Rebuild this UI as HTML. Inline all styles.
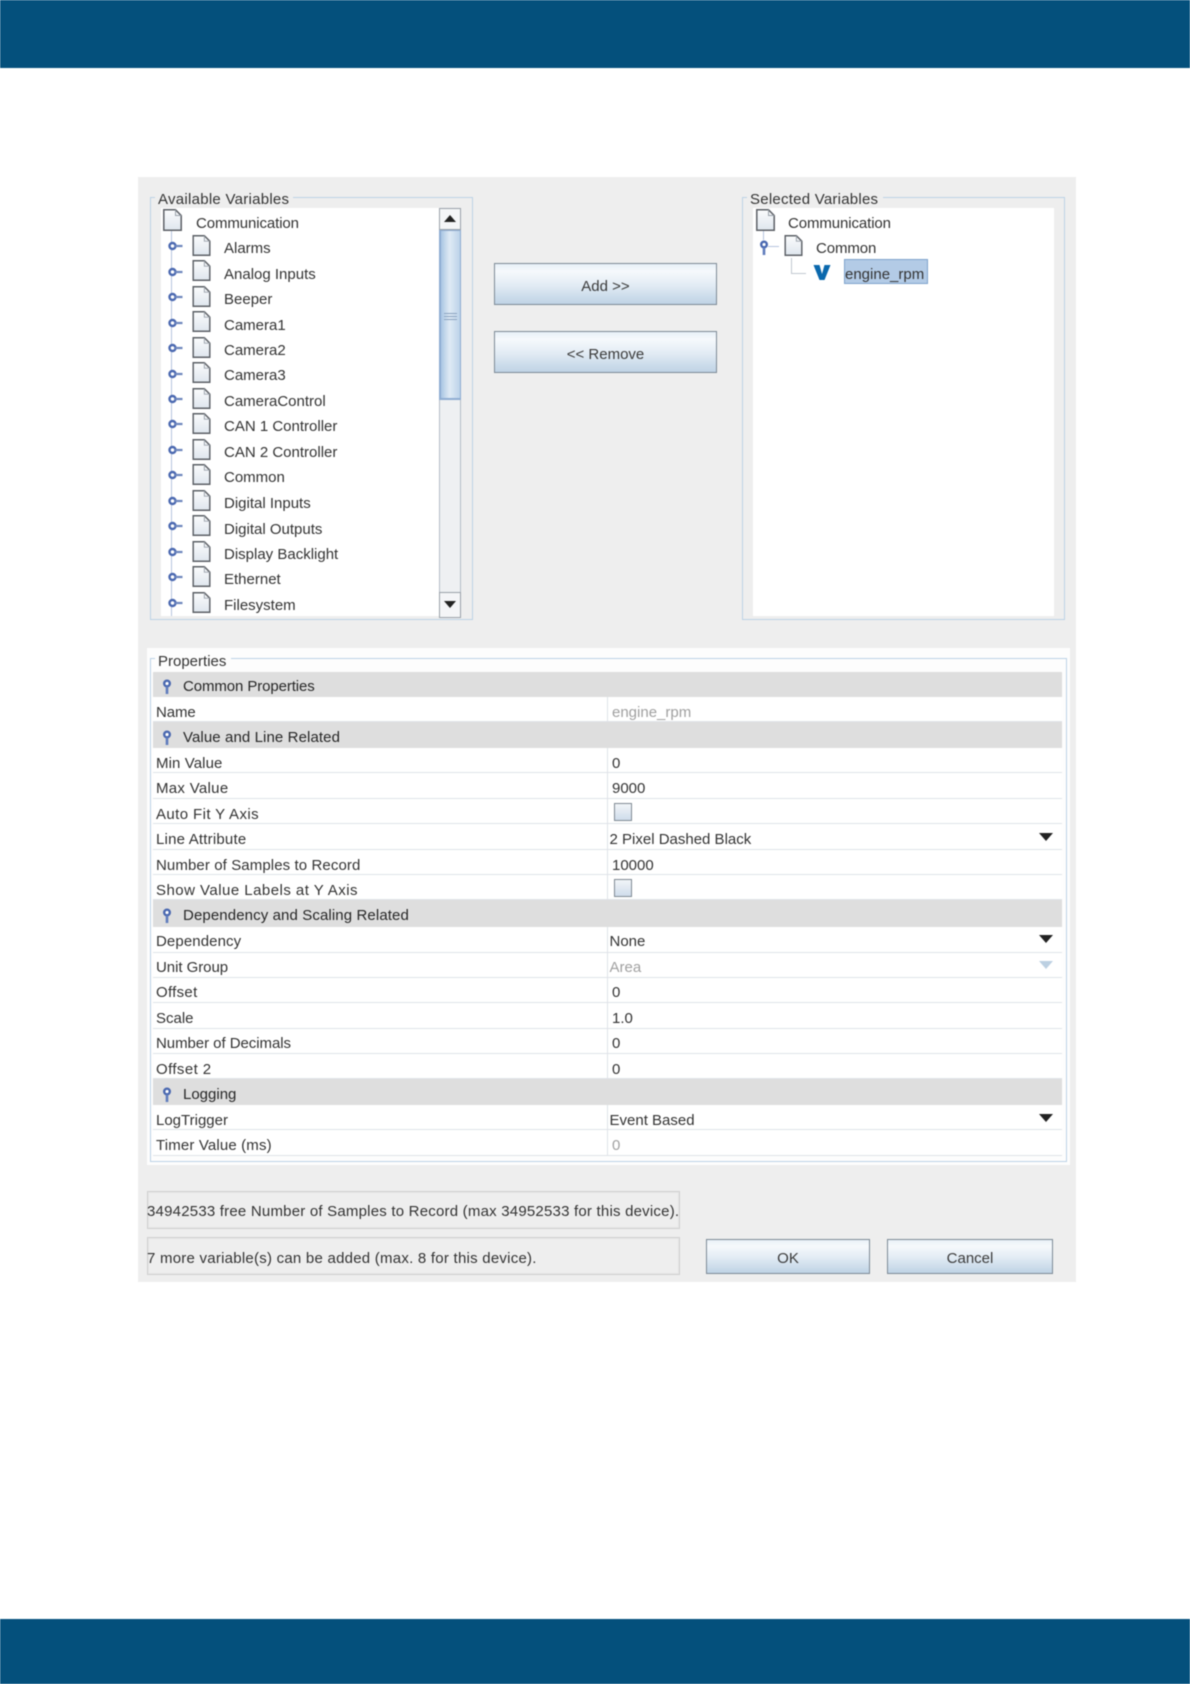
<!DOCTYPE html>
<html><head><meta charset="utf-8"><title>Variables</title>
<style>
html,body{margin:0;padding:0;background:#fff}
#p{position:relative;width:1190px;height:1684px;overflow:hidden;background:#fff;font:15px/1 "Liberation Sans",sans-serif;color:#333}
#p div,#p svg{position:absolute}
#w{left:0;top:0;width:1190px;height:1684px;filter:blur(.45px)}
.bar{left:0;width:1190px;background:#04507c}
.t{white-space:nowrap;height:26px;line-height:26px;margin-top:1px}
.gb{border:1px solid #bcd2e6;box-sizing:border-box}
.btn{box-sizing:border-box;border:1px solid #7d8a96;background:linear-gradient(#e8f0f7 0,#f6f9fc 18%,#e4edf5 50%,#bfd3e5 100%);text-align:center;color:#3a3a3a;margin-top:0}
.r{left:153px;width:909px;background:#fff;border-bottom:1px solid #dfe3e8;box-sizing:border-box}
.h{left:153px;width:909px;background:#dedede}
.l{left:156px;margin-top:1.5px}.v{left:612px;margin-top:1.5px}.c{left:609.5px;margin-top:1.5px}
.hd{left:183px;color:#262626;margin-top:1.5px}
.gr{color:#a0a0a0}
.sb{box-sizing:border-box;border:1px solid #b4bdc7;background:#eef0f2}
.st{left:147px;width:533px;box-sizing:border-box;border:1px solid #cfcfcf;box-shadow:inset 0 0 0 1px #e6e6e6;background:#eee}
</style></head><body>
<div id="p"><div id="w">
<svg width="0" height="0" style="left:0;top:0">
<defs>
<linearGradient id="dg" x1="0" y1="0" x2="0" y2="1"><stop offset="0" stop-color="#fbfcfd"/><stop offset="1" stop-color="#dfe6ee"/></linearGradient>
<symbol id="doc" viewBox="0 0 19 22"><path d="M.8.8H12.5L18.2 6.5V21.2H.8Z" fill="url(#dg)" stroke="#5c6066" stroke-width="1.5"/><path d="M12.5.8V6.5H18.2" fill="none" stroke="#9aa2ab" stroke-width="1"/></symbol>
<symbol id="node" viewBox="0 0 16 12"><circle cx="5.5" cy="6" r="3" fill="#fff" stroke="#4a68b0" stroke-width="2.4"/><path d="M8 6H15.5" stroke="#6d86bd" stroke-width="2.2"/></symbol>
<symbol id="key" viewBox="0 0 10 16"><circle cx="5" cy="4.5" r="2.8" fill="#fff" stroke="#4a68b0" stroke-width="2.4"/><path d="M5 7.5V15" stroke="#5f7cbc" stroke-width="2.6"/></symbol>
</defs></svg>

<div class="bar" style="top:0;height:68px"></div>
<div class="bar" style="top:1619px;height:65px"></div>

<div style="left:138px;top:177px;width:938px;height:1105px;background:#eeeeee"></div>

<!-- Available -->
<div class="gb" style="left:150px;top:197px;width:323px;height:423px"></div>
<div style="left:155px;top:190px;width:138px;height:16px;background:#eee"></div>
<div class="t" style="left:158px;top:185px;margin-top:1.5px;letter-spacing:.27px">Available Variables</div>
<div style="left:161px;top:208px;width:278px;height:408px;background:#fff"></div>
<div style="left:171px;top:231px;width:1px;height:385px;background:#b6c4de"></div>

<svg style="left:163px;top:209px" width="19" height="22"><use href="#doc"/></svg>
<div class="t" style="left:196px;top:210px;letter-spacing:-.1px">Communication</div>

<svg style="left:167px;top:240px" width="16" height="12"><use href="#node"/></svg><svg style="left:192px;top:235px" width="19" height="21"><use href="#doc"/></svg><div class="t" style="left:224px;top:235px">Alarms</div>
<svg style="left:167px;top:266px" width="16" height="12"><use href="#node"/></svg><svg style="left:192px;top:260px" width="19" height="21"><use href="#doc"/></svg><div class="t" style="left:224px;top:261px">Analog Inputs</div>
<svg style="left:167px;top:291px" width="16" height="12"><use href="#node"/></svg><svg style="left:192px;top:286px" width="19" height="21"><use href="#doc"/></svg><div class="t" style="left:224px;top:286px">Beeper</div>
<svg style="left:167px;top:317px" width="16" height="12"><use href="#node"/></svg><svg style="left:192px;top:311px" width="19" height="21"><use href="#doc"/></svg><div class="t" style="left:224px;top:312px">Camera1</div>
<svg style="left:167px;top:342px" width="16" height="12"><use href="#node"/></svg><svg style="left:192px;top:337px" width="19" height="21"><use href="#doc"/></svg><div class="t" style="left:224px;top:337px">Camera2</div>
<svg style="left:167px;top:368px" width="16" height="12"><use href="#node"/></svg><svg style="left:192px;top:362px" width="19" height="21"><use href="#doc"/></svg><div class="t" style="left:224px;top:362px">Camera3</div>
<svg style="left:167px;top:393px" width="16" height="12"><use href="#node"/></svg><svg style="left:192px;top:388px" width="19" height="21"><use href="#doc"/></svg><div class="t" style="left:224px;top:388px">CameraControl</div>
<svg style="left:167px;top:418px" width="16" height="12"><use href="#node"/></svg><svg style="left:192px;top:413px" width="19" height="21"><use href="#doc"/></svg><div class="t" style="left:224px;top:413px">CAN 1 Controller</div>
<svg style="left:167px;top:444px" width="16" height="12"><use href="#node"/></svg><svg style="left:192px;top:439px" width="19" height="21"><use href="#doc"/></svg><div class="t" style="left:224px;top:439px">CAN 2 Controller</div>
<svg style="left:167px;top:469px" width="16" height="12"><use href="#node"/></svg><svg style="left:192px;top:464px" width="19" height="21"><use href="#doc"/></svg><div class="t" style="left:224px;top:464px">Common</div>
<svg style="left:167px;top:495px" width="16" height="12"><use href="#node"/></svg><svg style="left:192px;top:490px" width="19" height="21"><use href="#doc"/></svg><div class="t" style="left:224px;top:490px">Digital Inputs</div>
<svg style="left:167px;top:520px" width="16" height="12"><use href="#node"/></svg><svg style="left:192px;top:515px" width="19" height="21"><use href="#doc"/></svg><div class="t" style="left:224px;top:516px">Digital Outputs</div>
<svg style="left:167px;top:546px" width="16" height="12"><use href="#node"/></svg><svg style="left:192px;top:541px" width="19" height="21"><use href="#doc"/></svg><div class="t" style="left:224px;top:541px">Display Backlight</div>
<svg style="left:167px;top:571px" width="16" height="12"><use href="#node"/></svg><svg style="left:192px;top:566px" width="19" height="21"><use href="#doc"/></svg><div class="t" style="left:224px;top:566px">Ethernet</div>
<svg style="left:167px;top:597px" width="16" height="12"><use href="#node"/></svg><svg style="left:192px;top:592px" width="19" height="21"><use href="#doc"/></svg><div class="t" style="left:224px;top:592px">Filesystem</div>

<!-- scrollbar -->
<div class="sb" style="left:439px;top:208px;width:22px;height:410px"></div>
<div class="sb" style="left:439px;top:208px;width:22px;height:22px;background:#f4f5f7;border-color:#9aa1a9"></div>
<svg style="left:443px;top:214px" width="14" height="9"><path d="M7 1L13 8H1Z" fill="#222"/></svg>
<div style="left:439px;top:230px;width:22px;height:170px;box-sizing:border-box;border:1px solid #8fadd2;border-left-width:2px;border-bottom-width:2px;background:linear-gradient(90deg,#a9c6e4,#dfeaf5 45%,#bcd3e9)"></div>
<div style="left:444px;top:313px;width:13px;height:1px;background:#8ba3bf"></div>
<div style="left:444px;top:316px;width:13px;height:1px;background:#8ba3bf"></div>
<div style="left:444px;top:319px;width:13px;height:1px;background:#8ba3bf"></div>
<div class="sb" style="left:439px;top:592px;width:22px;height:26px;background:#f4f5f7;border-color:#9aa1a9"></div>
<svg style="left:443px;top:600px" width="14" height="9"><path d="M1 1H13L7 8Z" fill="#222"/></svg>

<!-- buttons -->
<div class="btn t" style="left:494px;top:263px;width:223px;height:42px;line-height:46px">Add &gt;&gt;</div>
<div class="btn t" style="left:494px;top:331px;width:223px;height:42px;line-height:46px">&lt;&lt; Remove</div>

<!-- Selected -->
<div class="gb" style="left:742px;top:197px;width:323px;height:423px"></div>
<div style="left:747px;top:190px;width:136px;height:16px;background:#eee"></div>
<div class="t" style="left:750px;top:185px;margin-top:1.5px;letter-spacing:.24px">Selected Variables</div>
<div style="left:753px;top:208px;width:301px;height:408px;background:#fff"></div>
<svg style="left:756px;top:209px" width="19" height="22"><use href="#doc"/></svg>
<div class="t" style="left:788px;top:210px;letter-spacing:-.1px">Communication</div>
<div style="left:763px;top:231px;width:1px;height:9px;background:#b6c4de"></div>
<svg style="left:759px;top:240px" width="10" height="16"><use href="#key"/></svg>
<div style="left:768px;top:246px;width:11px;height:1px;background:#b6c4de"></div>
<svg style="left:784px;top:235px" width="19" height="21"><use href="#doc"/></svg>
<div class="t" style="left:816px;top:235px;letter-spacing:-.1px">Common</div>
<div style="left:791px;top:258px;width:1px;height:15px;background:#c2c8d0"></div>
<div style="left:791px;top:273px;width:15px;height:1px;background:#c2c8d0"></div>
<svg style="left:813px;top:264px" width="18" height="17"><path d="M.5 1H6.5L9 10L11.5 1H17.5L11.5 16H6.5Z" fill="#0a68ad"/></svg>
<div style="left:844px;top:259px;width:84px;height:25px;background:#b3cbe6;box-sizing:border-box;border:1px solid #7ea3cd"></div>
<div class="t" style="left:845px;top:261px">engine_rpm</div>

<!-- Properties -->
<div style="left:147px;top:648px;width:923px;height:517px;background:#fdfdfd"></div>
<div class="gb" style="left:150px;top:658px;width:917px;height:504px"></div>
<div style="left:155px;top:650px;width:76px;height:16px;background:#fdfdfd"></div>
<div class="t" style="left:158px;top:647px;margin-top:2px">Properties</div>

<div class="h" style="top:672px;height:25px"></div>
<div class="r" style="top:697px;height:25px"></div>
<div class="h" style="top:722px;height:26px"></div>
<div class="r" style="top:748px;height:25px"></div>
<div class="r" style="top:773px;height:26px"></div>
<div class="r" style="top:799px;height:25px"></div>
<div class="r" style="top:824px;height:26px"></div>
<div class="r" style="top:850px;height:25px"></div>
<div class="r" style="top:875px;height:25px"></div>
<div class="h" style="top:900px;height:27px"></div>
<div class="r" style="top:927px;height:26px"></div>
<div class="r" style="top:953px;height:25px"></div>
<div class="r" style="top:978px;height:25px"></div>
<div class="r" style="top:1003px;height:26px"></div>
<div class="r" style="top:1029px;height:25px"></div>
<div class="r" style="top:1054px;height:25px"></div>
<div class="h" style="top:1079px;height:26px"></div>
<div class="r" style="top:1105px;height:25px"></div>
<div class="r" style="top:1130px;height:26px"></div>
<div style="left:607px;top:697px;width:1px;height:25px;background:#dfe3e8"></div>
<div style="left:607px;top:748px;width:1px;height:152px;background:#dfe3e8"></div>
<div style="left:607px;top:927px;width:1px;height:152px;background:#dfe3e8"></div>
<div style="left:607px;top:1105px;width:1px;height:51px;background:#dfe3e8"></div>

<svg style="left:162px;top:679px" width="10" height="16"><use href="#key"/></svg><div class="t hd" style="top:672px;letter-spacing:-.1px">Common Properties</div>
<div class="t l" style="top:698px;letter-spacing:-.1px">Name</div><div class="t v gr" style="top:698px">engine_rpm</div>
<svg style="left:162px;top:730px" width="10" height="16"><use href="#key"/></svg><div class="t hd" style="top:723px;letter-spacing:.1px">Value and Line Related</div>
<div class="t l" style="top:749px;letter-spacing:.1px">Min Value</div><div class="t v" style="top:749px">0</div>
<div class="t l" style="top:774px;letter-spacing:.3px">Max Value</div><div class="t v" style="top:774px">9000</div>
<div class="t l" style="top:800px;letter-spacing:.4px">Auto Fit Y Axis</div>
<div style="left:614px;top:803px;width:18px;height:18px;box-sizing:border-box;border:1px solid #7f8a94;background:linear-gradient(#f2f5f8,#cfdceb)"></div>
<div class="t l" style="top:825px;letter-spacing:.2px">Line Attribute</div><div class="t c" style="top:825px">2 Pixel Dashed Black</div>
<svg style="left:1038px;top:833px" width="16" height="9"><path d="M1 0H15L8 8Z" fill="#222"/></svg>
<div class="t l" style="top:851px;letter-spacing:.1px">Number of Samples to Record</div><div class="t v" style="top:851px">10000</div>
<div class="t l" style="top:876px;letter-spacing:.47px">Show Value Labels at Y Axis</div>
<div style="left:614px;top:879px;width:18px;height:18px;box-sizing:border-box;border:1px solid #7f8a94;background:linear-gradient(#f2f5f8,#cfdceb)"></div>
<svg style="left:162px;top:908px" width="10" height="16"><use href="#key"/></svg><div class="t hd" style="top:901px;letter-spacing:.11px">Dependency and Scaling Related</div>
<div class="t l" style="top:927px;letter-spacing:.1px">Dependency</div><div class="t c" style="top:927px">None</div>
<svg style="left:1038px;top:935px" width="16" height="9"><path d="M1 0H15L8 8Z" fill="#222"/></svg>
<div class="t l" style="top:953px;letter-spacing:-.05px">Unit Group</div><div class="t c gr" style="top:953px">Area</div>
<svg style="left:1038px;top:961px" width="16" height="9"><path d="M1 0H15L8 8Z" fill="#bcd0e2"/></svg>
<div class="t l" style="top:978px;letter-spacing:.3px">Offset</div><div class="t v" style="top:978px">0</div>
<div class="t l" style="top:1004px">Scale</div><div class="t v" style="top:1004px">1.0</div>
<div class="t l" style="top:1029px;letter-spacing:-.05px">Number of Decimals</div><div class="t v" style="top:1029px">0</div>
<div class="t l" style="top:1055px;letter-spacing:.4px">Offset 2</div><div class="t v" style="top:1055px">0</div>
<svg style="left:162px;top:1087px" width="10" height="16"><use href="#key"/></svg><div class="t hd" style="top:1080px">Logging</div>
<div class="t l" style="top:1106px">LogTrigger</div><div class="t c" style="top:1106px">Event Based</div>
<svg style="left:1038px;top:1114px" width="16" height="9"><path d="M1 0H15L8 8Z" fill="#222"/></svg>
<div class="t l" style="top:1131px;letter-spacing:.15px">Timer Value (ms)</div><div class="t v gr" style="top:1131px">0</div>

<!-- status -->
<div class="st" style="top:1191px;height:38px"></div>
<div class="t" style="left:147px;top:1198px;letter-spacing:.21px">34942533 free Number of Samples to Record (max 34952533 for this device).</div>
<div class="st" style="top:1237px;height:38px"></div>
<div class="t" style="left:147px;top:1245px;letter-spacing:.24px">7 more variable(s) can be added (max. 8 for this device).</div>

<div class="btn t" style="left:706px;top:1239px;width:164px;height:35px;line-height:37px">OK</div>
<div class="btn t" style="left:887px;top:1239px;width:166px;height:35px;line-height:37px">Cancel</div>
</div></div>
</body></html>
